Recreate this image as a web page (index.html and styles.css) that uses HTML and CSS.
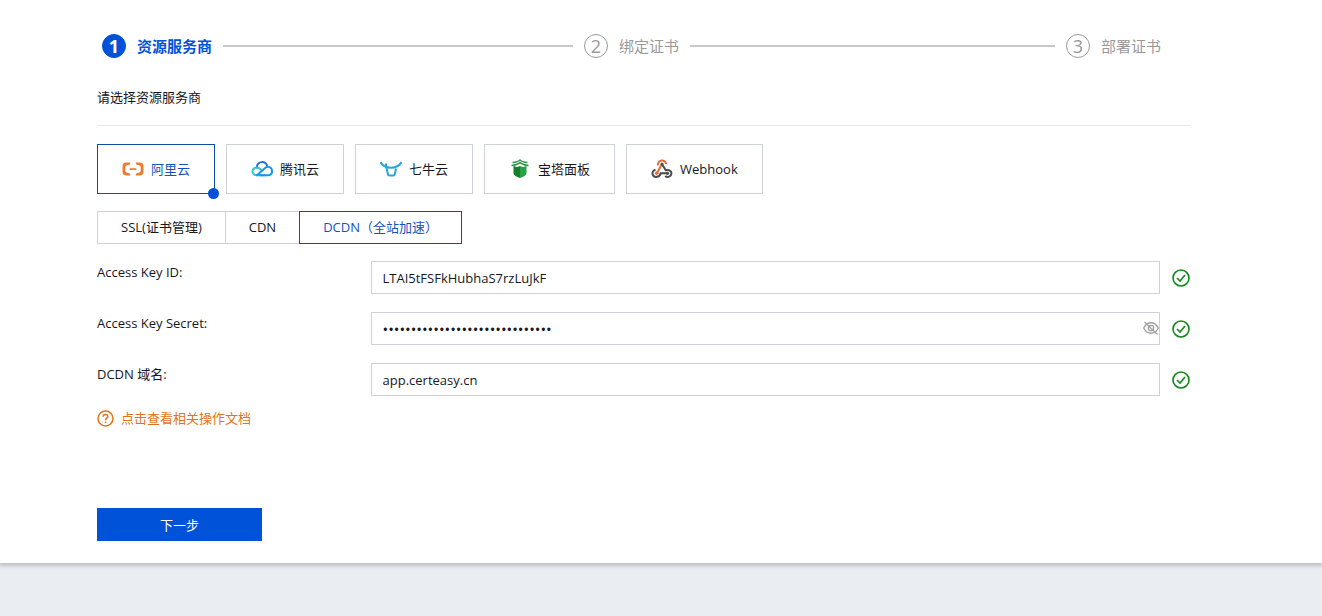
FILE: index.html
```html
<!DOCTYPE html>
<html lang="zh-CN">
<head>
<meta charset="utf-8">
<meta name="viewport" content="width=device-width, initial-scale=1">
<title>资源服务商</title>
<link rel="stylesheet" href="styles.css">
</head>
<body>
<main class="panel">
  <ol class="steps">
    <li class="step step-active"><span class="step-icon">1</span><span class="step-title">资源服务商</span></li>
    <li class="step"><span class="step-icon">2</span><span class="step-title">绑定证书</span></li>
    <li class="step"><span class="step-icon">3</span><span class="step-title">部署证书</span></li>
  </ol>

  <form class="form">
    <h1 class="heading">请选择资源服务商</h1>

    <div class="providers" role="radiogroup" aria-label="资源服务商">
      <label class="provider">
        <input class="choice" type="radio" name="provider" checked>
        <svg class="logo" viewBox="0 0 22 22" fill="#f07b2c">
          <path d="M8.500 4.500H4.500Q.5 4.500.5 8.500v5q0 4 4 4h4l-1-2.200-2.500-.6Q3.300 14.300 3.300 13V9Q3.300 7.700 5 7.300l2.500-.6zM13.500 4.500h4q4 0 4 4v5q0 4-4 4h-4l1-2.200 2.500-.6q1.700-.4 1.700-1.700V9q0-1.300-1.700-1.700l-2.500-.6zM7.700 10.200h6.600v1.700H7.700z"/>
        </svg>
        <span>阿里云</span>
      </label>
      <label class="provider">
        <input class="choice" type="radio" name="provider">
        <svg class="logo" viewBox="0 0 22 22" fill="none" stroke-width="2" stroke-linecap="round">
          <path d="M5.800 9.500C6 2.500 15.500 2.500 16.200 8.500" stroke="#1c6fe0"/>
          <path d="M14 17.300H6C-.2 17.300.2 9.300 6 9.600c2.200.1 3.300 1.300 4.500 2.500" stroke="#2bc4dc"/>
          <path d="M6 17.300l7.800-7.100c3-2.800 7.300-.9 7.300 3 0 2.500-1.800 4.100-4.300 4.100H9" stroke="#1f93ee"/>
        </svg>
        <span>腾讯云</span>
      </label>
      <label class="provider">
        <input class="choice" type="radio" name="provider">
        <svg class="logo" viewBox="0 0 22 22" fill="none" stroke="#23a9dd">
          <path d="M.5 4C4.500 11.500 17.500 11.500 21.500 4" stroke-width="2"/>
          <path d="M5.800 5.500L7.800 16q.3 1.600 1.700 1.600h3.700q1.400 0 1.700-1.600l1.100-5.500" stroke-width="2"/>
        </svg>
        <span>七牛云</span>
      </label>
      <label class="provider">
        <input class="choice" type="radio" name="provider">
        <svg class="logo" viewBox="0 0 22 22">
          <path d="M4.500 8L8 9 11 8V20c-3.500-1.200-6.500-2.500-6.500-5z" fill="#15812f"/>
          <path d="M17.500 8L14 9 11 8V20c3.500-1.200 6.500-2.500 6.500-5z" fill="#27a243"/>
          <path d="M3.500 4.500C7 4.300 9.500 3.500 11 2c1.500 1.500 4 2.300 7.500 2.500M2.500 7.500C6.500 7.100 9.300 6 11 4.600c1.700 1.400 4.500 2.500 8.500 2.900" fill="none" stroke="#2d9848" stroke-width="1.400"/>
        </svg>
        <span>宝塔面板</span>
      </label>
      <label class="provider">
        <input class="choice" type="radio" name="provider">
        <svg class="logo" viewBox="0 0 22 22" fill="none" stroke-width="2">
          <path d="M6.900 7.300A4.200 4.200 0 1 1 15.200 6" stroke="#e0693c"/>
          <path d="M11 6L6 15" stroke="#e0693c"/>
          <path d="M11 6l3.800 6.300c3.100-1.100 5.700.8 5.700 3.100a3.800 3.800 0 0 1-6.300 2.500M16.300 15.300H9.700c-.8 4.400-6.800 4.600-8 1.400-.9-2.500.7-4.500 2.800-5" stroke="#484b50"/>
          <circle cx="11" cy="6" r="1.500" fill="#484b50"/>
          <circle cx="5.700" cy="15.300" r="1.800" fill="#e0693c"/>
          <circle cx="16.500" cy="15.300" r="1.600" fill="#484b50"/>
        </svg>
        <span>Webhook</span>
      </label>
    </div>

    <div class="tabs" role="radiogroup" aria-label="资源类型">
      <label class="tab"><input class="choice" type="radio" name="resource">SSL(证书管理)</label>
      <label class="tab"><input class="choice" type="radio" name="resource">CDN</label>
      <label class="tab"><input class="choice" type="radio" name="resource" checked>DCDN（全站加速）</label>
    </div>

    <div class="row">
      <label class="row-label" for="key-id">Access Key ID:</label>
      <div class="field"><input class="input" id="key-id" type="text" value="LTAI5tFSFkHubhaS7rzLuJkF"></div>
      <svg class="valid" viewBox="0 0 18 18"><circle cx="9" cy="9" r="8"/><path d="M5 9l3 3 5-6"/></svg>
    </div>
    <div class="row">
      <label class="row-label" for="key-secret">Access Key Secret:</label>
      <div class="field">
        <input class="input secret" id="key-secret" type="password" value="abcdefghijklmnopqrstuvwxyz1234">
        <button class="reveal" type="button" aria-label="显示密码">
          <svg class="eye" viewBox="0 0 16 16"><path d="M.700 8C4 1 12 1 15.300 8 12 15 4 15 .700 8zM1.500 2l13 12.500"/><circle cx="8" cy="8" r="2.700"/></svg>
        </button>
      </div>
      <svg class="valid" viewBox="0 0 18 18"><circle cx="9" cy="9" r="8"/><path d="M5 9l3 3 5-6"/></svg>
    </div>
    <div class="row">
      <label class="row-label" for="domain">DCDN 域名:</label>
      <div class="field"><input class="input" id="domain" type="text" value="app.certeasy.cn"></div>
      <svg class="valid" viewBox="0 0 18 18"><circle cx="9" cy="9" r="8"/><path d="M5 9l3 3 5-6"/></svg>
    </div>

    <a class="help" href="#docs">
      <svg class="help-icon" viewBox="0 0 17 17"><circle cx="8.500" cy="8.500" r="7.500"/><path d="M6.200 6.700c0-3 4.600-3 4.600-.2 0 1.700-2.300 1.700-2.300 3.700M8.500 11.500v1.600"/></svg>
      <span>点击查看相关操作文档</span>
    </a>

    <button class="next" type="submit">下一步</button>
  </form>
</main>
</body>
</html>
```
FILE: styles.css
```css
* {
  box-sizing: border-box;
}

body {
  min-height: 100vh;
  margin: 0;
  background: #eaedf2;
  color: #16181d;
  font-family: "Open Sans", "Noto Sans CJK SC", sans-serif;
  font-size: 13px;
  line-height: 20px;
}

.panel {
  position: relative;
  padding: 34px 131px 22px 97px;
  background: #fff;
  box-shadow: 0 2px 4px 1px #bcc0c6;
}

.steps {
  display: flex;
  margin: 0;
  padding: 0 0 0 5px;
  list-style: none;
}

.step {
  display: flex;
  flex: 1;
  align-items: center;
  gap: 11px;
  padding-right: 11px;
  color: #999;
  font-size: 15px;
  line-height: 24px;
}

.step::after {
  content: "";
  flex: 1;
  height: 2px;
  background: #c8c8c8;
}

.step:last-child {
  flex: none;
  width: 125px;
  padding-right: 0;
}

.step:last-child::after {
  display: none;
}

.step-icon {
  display: flex;
  align-items: center;
  justify-content: center;
  width: 24px;
  height: 24px;
  border: 1px solid #999;
  border-radius: 50%;
  font-size: 18px;
  font-weight: 400;
}

.step-active {
  color: #0052d9;
  font-weight: 700;
}

.step-active .step-icon {
  border-color: #0052d9;
  background: #0052d9;
  color: #fff;
  font-weight: 700;
}

.heading {
  margin: 0 0 18px;
  padding: 29px 0 18px;
  border-bottom: 1px solid #e7e7e7;
  font-size: 13px;
  font-weight: 400;
}

.choice {
  position: absolute;
  inset: 0;
  width: 100%;
  height: 100%;
  margin: 0;
  opacity: 0;
  cursor: pointer;
}

.providers {
  display: flex;
  flex-wrap: wrap;
  gap: 11px;
}

.provider {
  position: relative;
  display: flex;
  align-items: center;
  gap: 7px;
  height: 50px;
  padding: 0 24px;
  border: 1px solid #cfd3d8;
}

.provider:has(:checked),
.tab:has(:checked) {
  z-index: 1;
  border-color: #0a4ea8;
  color: #1453bd;
}

.provider:has(:checked)::after {
  content: "";
  position: absolute;
  right: -5px;
  bottom: -6px;
  width: 11px;
  height: 11px;
  border-radius: 50%;
  background: #0052d9;
}

.logo {
  width: 22px;
  height: 22px;
}

.tabs {
  display: flex;
  margin: 17px 0;
}

.tab {
  position: relative;
  padding: 5px 23px 6px;
  border: 1px solid #cfd3d8;
}

.tab + .tab {
  margin-left: -1px;
}

.row {
  display: grid;
  grid-template-columns: 25% 1fr 19px;
  align-items: center;
  margin-bottom: 18px;
}

.row-label {
  align-self: start;
  padding-top: 1px;
}

.field {
  position: relative;
  margin-right: 12px;
}

.input {
  display: block;
  width: 100%;
  height: 33px;
  padding: 0 11px;
  border: 1px solid #cfd3d8;
  border-radius: 0;
  background: #fff;
  color: inherit;
  font: inherit;
}

.secret {
  padding-right: 24px;
  font-size: 15px;
}

.reveal {
  position: absolute;
  top: 8px;
  right: 1px;
  display: flex;
  padding: 0;
  border: 0;
  background: none;
}

.eye {
  width: 16px;
  height: 16px;
  fill: none;
  stroke: #a0a0a0;
  stroke-width: 1.3;
}

.valid {
  width: 18px;
  height: 18px;
  fill: none;
  stroke: #108a18;
  stroke-width: 1.6;
}

.help {
  display: flex;
  align-items: center;
  gap: 7px;
  width: max-content;
  margin-top: -6px;
  color: #e37318;
  text-decoration: none;
}

.help-icon {
  width: 17px;
  height: 17px;
  fill: none;
  stroke: currentColor;
  stroke-width: 1.5;
}

.next {
  display: block;
  width: 165px;
  height: 33px;
  margin-top: 80px;
  padding: 0;
  border: 0;
  background: #0052d9;
  color: #fff;
  font: inherit;
}
```
